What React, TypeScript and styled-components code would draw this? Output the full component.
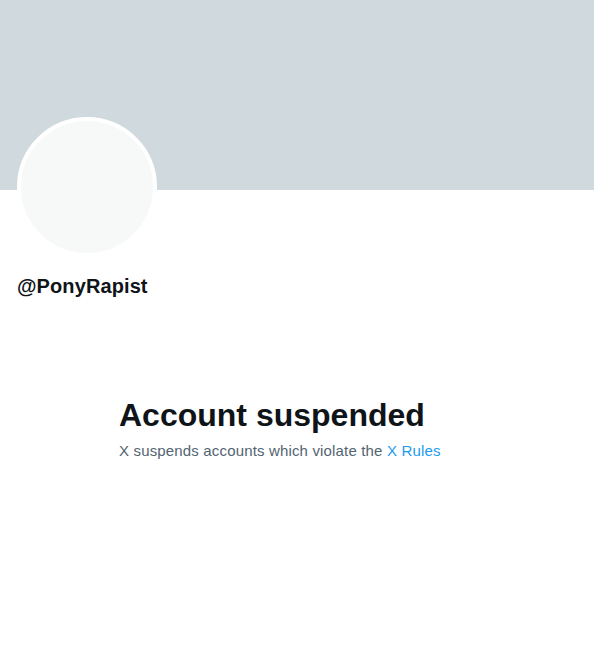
import React from "react";
import styled, { createGlobalStyle } from "styled-components";

const Global = createGlobalStyle`
  html, body { margin: 0; padding: 0; background: #fff; }
  body { font-family: "Liberation Sans", Arial, sans-serif; }
`;

const Page = styled.div`
  width: 594px;
  height: 668px;
  background: #fff;
  overflow: hidden;
`;

const Banner = styled.div`
  height: 190px;
  background: #cfd9de;
`;

const ProfileHead = styled.div`
  padding: 0 17px;
  margin-top: -73px;
  display: flex;
  flex-direction: column;
`;

const Avatar = styled.div`
  width: 132px;
  height: 132px;
  border-radius: 50%;
  border: 4px solid #fff;
  background: #f7f9f9;
`;

const Handle = styled.div`
  margin-top: 17px;
  font-size: 20px;
  font-weight: 700;
  color: #0f1419;
  line-height: 24px;
  letter-spacing: 0.1px;
`;

const Notice = styled.div`
  margin-top: 99px;
  padding-left: 119px;
  display: flex;
  flex-direction: column;
`;

const Title = styled.div`
  font-size: 32px;
  font-weight: 800;
  color: #0f1419;
  line-height: 36px;
`;

const Sub = styled.div`
  margin-top: 8px;
  font-size: 15px;
  color: #536471;
  line-height: 20px;
  letter-spacing: 0.16px;
`;

const Link = styled.a`
  color: #1d9bf0;
  text-decoration: none;
`;

export default function App() {
  return (
    <Page>
      <Global />
      <Banner />
      <ProfileHead>
        <Avatar />
        <Handle>@PonyRapist</Handle>
      </ProfileHead>
      <Notice>
        <Title>Account suspended</Title>
        <Sub>
          X suspends accounts which violate the <Link href="#">X Rules</Link>
        </Sub>
      </Notice>
    </Page>
  );
}
